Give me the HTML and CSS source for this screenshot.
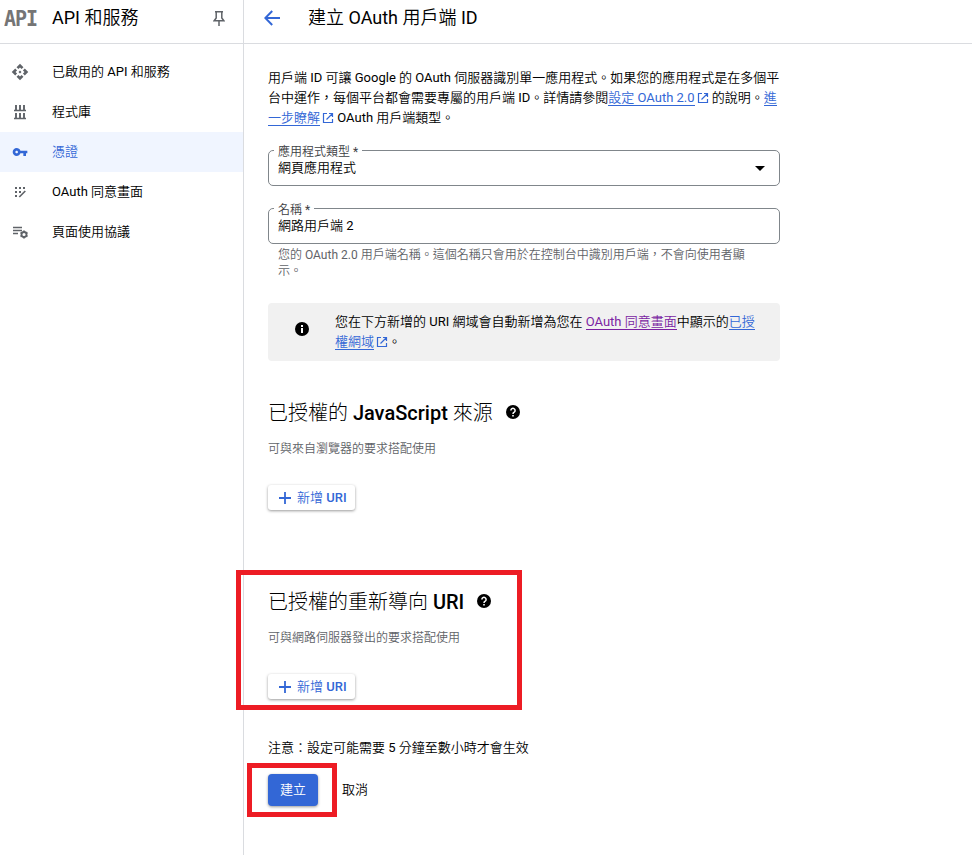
FILE: index.html
```html
<!DOCTYPE html>
<html lang="zh-TW">

<head>
    <meta charset="UTF-8">
    <meta name="viewport" content="width=device-width, initial-scale=1.0">
    <title>建立 OAuth 用戶端 ID</title>
    <link rel="stylesheet" href="styles.css">
</head>

<body>
    <svg class="defs" width="0" height="0">
        <symbol id="open" viewBox="0 0 12 12">
            <path d="M5 1.500H1.500v9h9V7M7 1.500h3.500V5M10.500 1.500L4.500 7.500" fill="none" stroke="currentColor" stroke-width="1.200" />
        </symbol>
        <symbol id="help" viewBox="0 0 14 14">
            <circle cx="7" cy="7" r="7" />
            <path d="M4.900 5.500a2.100 2.100 0 1 1 3.300 1.700C7.400 7.700 7 8 7 8.900" fill="none" stroke="#fff" stroke-width="1.500" />
            <path d="M6.200 10h1.600v1.500H6.200z" fill="#fff" />
        </symbol>
        <symbol id="plus" viewBox="0 0 12 12">
            <path d="M6 0v12M0 6h12" stroke="currentColor" stroke-width="1.800" />
        </symbol>
    </svg>

    <div class="page">
        <nav class="sidebar">
            <div class="sidebar-head">
                <span class="logo">API</span>
                <span class="product">API 和服務</span>
                <svg class="pin" width="12" height="15" viewBox="0 0 12 15">
                    <path d="M2 .8h8M3.200 1v6L1.200 9.700h9.600L8.800 7V1M6 9.700V15" fill="none" stroke="#5f6368" stroke-width="1.500" />
                </svg>
            </div>
            <ul class="menu">
                <li class="item">
                    <svg class="item-icon" width="18" height="18" viewBox="0 0 24 24">
                        <path d="M14 12l-2 2-2-2 2-2 2 2zm-2-6l2.120 2.120 2.500-2.500L12 1 7.380 5.620l2.500 2.500L12 6zm-6 6l2.120-2.120-2.500-2.500L1 12l4.620 4.620 2.500-2.500L6 12zm12 0l-2.120 2.120 2.500 2.500L23 12l-4.620-4.620-2.500 2.500L18 12zm-6 6l-2.120-2.120-2.500 2.500L12 23l4.620-4.620-2.500-2.500L12 18z" />
                    </svg>
                    已啟用的 API 和服務
                </li>
                <li class="item">
                    <svg class="item-icon" width="18" height="18" viewBox="0 0 18 18">
                        <path d="M3 7.500h12M3 15.500h12" stroke="currentColor" stroke-width="1.300" />
                        <path d="M5 2v5M9 2v5M13 2v5M5 10v5M9 10v5M13 10v5" stroke="currentColor" stroke-width="1.900" />
                    </svg>
                    程式庫
                </li>
                <li class="item active">
                    <svg class="item-icon" width="16" height="16" viewBox="0 0 24 24">
                        <path d="M12.650 10C11.830 7.670 9.610 6 7 6c-3.310 0-6 2.690-6 6s2.690 6 6 6c2.610 0 4.830-1.670 5.650-4H17v4h4v-4h2v-4H12.650zM7 14c-1.100 0-2-.9-2-2s.9-2 2-2 2 .9 2 2-.9 2-2 2z" />
                    </svg>
                    憑證
                </li>
                <li class="item">
                    <svg class="item-icon" width="18" height="18" viewBox="0 0 18 18">
                        <path d="M4 4h2v2H4zM8 4h2v2H8zM12 4h2v2h-2zM4 8h2v2H4zM8 8h2v2H8zM4 12h2v2H4z" />
                        <path d="M8.300 14l6-6" stroke="currentColor" stroke-width="1.700" />
                    </svg>
                    OAuth 同意畫面
                </li>
                <li class="item">
                    <svg class="item-icon" width="18" height="18" viewBox="0 0 18 18">
                        <path d="M2 4.500h9M2 7.500h9M2 10.500h5" stroke="currentColor" stroke-width="1.400" />
                        <circle cx="13" cy="11.500" r="2.500" fill="none" stroke="currentColor" stroke-width="1.800" />
                        <path d="M13 7.500V9M13 14v1.500M9.500 9.500l1.300.8M15.200 12.700l1.300.8M9.500 13.500l1.300-.8M15.200 10.300l1.300-.8" stroke="currentColor" stroke-width="1.700" />
                    </svg>
                    頁面使用協議
                </li>
            </ul>
        </nav>

        <main class="main">
            <header class="main-head">
                <svg class="back" width="16" height="16" viewBox="0 0 16 16">
                    <path d="M16 8H1.500M8.200 1L1.300 8l6.900 7" fill="none" stroke="#3367d6" stroke-width="2" />
                </svg>
                <h1>建立 OAuth 用戶端 ID</h1>
            </header>

            <div class="content">
                <p class="intro">
                    用戶端 ID 可讓 Google 的 OAuth 伺服器識別單一應用程式。如果您的應用程式是在多個平<br>台中運作，每個平台都會需要專屬的用戶端 ID。詳情請參閱<a href="#">設定 OAuth 2.0</a><svg class="open"><use href="#open" /></svg> 的說明。<a href="#">進<br>一步瞭解</a><svg class="open"><use href="#open" /></svg> OAuth 用戶端類型。
                </p>

                <div class="field">
                    <span class="label">應用程式類型 *</span>
                    <span class="value">網頁應用程式</span>
                    <svg class="arrow" width="10" height="5" viewBox="0 0 10 5"><path d="M0 0h10L5 5z" /></svg>
                </div>
                <div class="field">
                    <span class="label">名稱 *</span>
                    <span class="value">網路用戶端 2</span>
                </div>
                <p class="hint">您的 OAuth 2.0 用戶端名稱。這個名稱只會用於在控制台中識別用戶端，不會向使用者顯<br>示。</p>

                <div class="notice">
                    <svg class="info" width="14" height="14" viewBox="0 0 14 14">
                        <circle cx="7" cy="7" r="7" />
                        <path d="M6 3h2v2H6zM6 6h2v5H6z" fill="#fff" />
                    </svg>
                    <p>您在下方新增的 URI 網域會自動新增為您在 <a class="visited" href="#">OAuth 同意畫面</a>中顯示的<a href="#">已授<br>權網域</a><svg class="open"><use href="#open" /></svg>。</p>
                </div>

                <section class="uris">
                    <h2>已授權的 <b>JavaScript</b> 來源<svg class="help"><use href="#help" /></svg></h2>
                    <p class="desc">可與來自瀏覽器的要求搭配使用</p>
                    <button class="add"><svg class="plus"><use href="#plus" /></svg>新增 <b>URI</b></button>
                </section>

                <section class="uris redirect">
                    <h2>已授權的重新導向 <b>URI</b><svg class="help"><use href="#help" /></svg></h2>
                    <p class="desc">可與網路伺服器發出的要求搭配使用</p>
                    <button class="add"><svg class="plus"><use href="#plus" /></svg>新增 <b>URI</b></button>
                    <div class="mark mark-uris"></div>
                </section>

                <p class="note">注意：設定可能需要 5 分鐘至數小時才會生效</p>
                <div class="actions">
                    <button class="create">建立</button>
                    <button class="cancel">取消</button>
                    <div class="mark mark-create"></div>
                </div>
            </div>
        </main>
    </div>
</body>

</html>
```
FILE: styles.css
```css
* {
    padding: 0;
    margin: 0;
    box-sizing: border-box;
}

body {
    font-family: Roboto, "Noto Sans CJK TC DemiLight", "Noto Sans CJK TC", sans-serif;
    font-size: 13px;
    line-height: 20px;
    color: #000;
    background-color: #fff;
    white-space: nowrap;
    text-spacing-trim: space-all;
}

.defs {
    display: block;
}

a {
    color: #3367d6;
    text-decoration: none;
    border-bottom: 1px solid #3367d6;
}

.visited {
    color: #7b1fa2;
    border-color: #7b1fa2;
}

b {
    font-weight: 500;
}

button {
    font: inherit;
    border: none;
    background: none;
}

.page {
    display: flex;
    height: 855px;
}

/* sidebar */
.sidebar {
    width: 244px;
    border-right: 1px solid #dadce0;
}

.sidebar-head {
    display: flex;
    align-items: center;
    height: 44px;
    padding: 0 18px 7px 4px;
    border-bottom: 1px solid #dadce0;
}

.logo {
    width: 48px;
    font: bold 20px "DejaVu Sans Mono", monospace;
    letter-spacing: -1px;
    color: #757575;
    transform: scaleY(1.1);
}

.product {
    flex: 1;
    font-size: 18px;
}

.menu {
    list-style: none;
    padding-top: 8px;
}

.item {
    display: flex;
    align-items: center;
    height: 40px;
}

.item-icon {
    flex: none;
    width: 18px;
    margin: 0 23px 0 11px;
    color: #5f6368;
    fill: #5f6368;
}

.active {
    color: #3367d6;
    background-color: #f0f5ff;
}

.active .item-icon {
    color: #3367d6;
    fill: #3367d6;
}

/* main */
.main {
    flex: 1;
}

.main-head {
    display: flex;
    align-items: center;
    gap: 28px;
    height: 44px;
    padding: 0 20px 7px;
    border-bottom: 1px solid #dadce0;
}

.main-head h1 {
    font-size: 18px;
    font-weight: 400;
}

.content {
    width: 560px;
    padding: 24px 24px 0;
}

.open {
    width: 12px;
    height: 12px;
    margin-left: 2px;
    color: #3367d6;
    vertical-align: -2px;
}

.field {
    position: relative;
    display: flex;
    align-items: center;
    justify-content: space-between;
    height: 36px;
    margin-top: 22px;
    padding: 0 14px 0 9px;
    border: 1px solid #80868b;
    border-radius: 5px;
}

.label {
    position: absolute;
    top: -6px;
    left: 5px;
    padding: 0 4px;
    font-size: 12px;
    line-height: 14px;
    color: #3c4043;
    background-color: #fff;
}

/* keeps the value above the floating label */
.value {
    position: relative;
}

.hint {
    margin: 3px 10px 0;
    font-size: 12px;
    line-height: 16px;
    color: #5f6368;
}

.notice {
    display: flex;
    align-items: center;
    gap: 26px;
    height: 58px;
    margin-top: 24px;
    padding: 0 27px;
    background-color: #f1f1f1;
    border-radius: 4px;
}

.info {
    flex: none;
    margin-top: -6px;
}

.uris {
    position: relative;
    height: 189px;
    padding-top: 40px;
}

.redirect {
    height: 188px;
}

.uris h2 {
    display: flex;
    align-items: center;
    height: 24px;
    font-family: Roboto, "Noto Sans CJK TC", sans-serif;
    font-size: 20px;
    font-weight: 300;
    line-height: 24px;
    white-space: pre;
}

.help {
    width: 14px;
    height: 14px;
    margin: -2px 0 0 13px;
}

.desc {
    margin-top: 14px;
    font-size: 12px;
    color: #5f6368;
}

.add {
    display: flex;
    align-items: center;
    height: 25px;
    margin-top: 26px;
    padding: 0 8px 0 11px;
    color: #3367d6;
    border-radius: 3px;
    box-shadow: 0 1px 3px rgba(0, 0, 0, .4);
    white-space: pre;
}

.plus {
    width: 12px;
    height: 12px;
    margin-right: 6px;
}

.actions {
    position: relative;
    display: flex;
    align-items: center;
    gap: 24px;
    margin-top: 16px;
}

.create {
    width: 50px;
    height: 32px;
    color: #fff;
    background-color: #3367d6;
    border-radius: 4px;
    box-shadow: 0 1px 3px rgba(0, 0, 0, .4);
}

/* red highlight frames drawn over the form */
.mark {
    position: absolute;
    border: 5px solid #ed1c24;
    pointer-events: none;
}

.mark-uris {
    top: 20px;
    left: -32px;
    width: 286px;
    height: 140px;
}

.mark-create {
    top: -11px;
    left: -21px;
    width: 90px;
    height: 54px;
}
```
